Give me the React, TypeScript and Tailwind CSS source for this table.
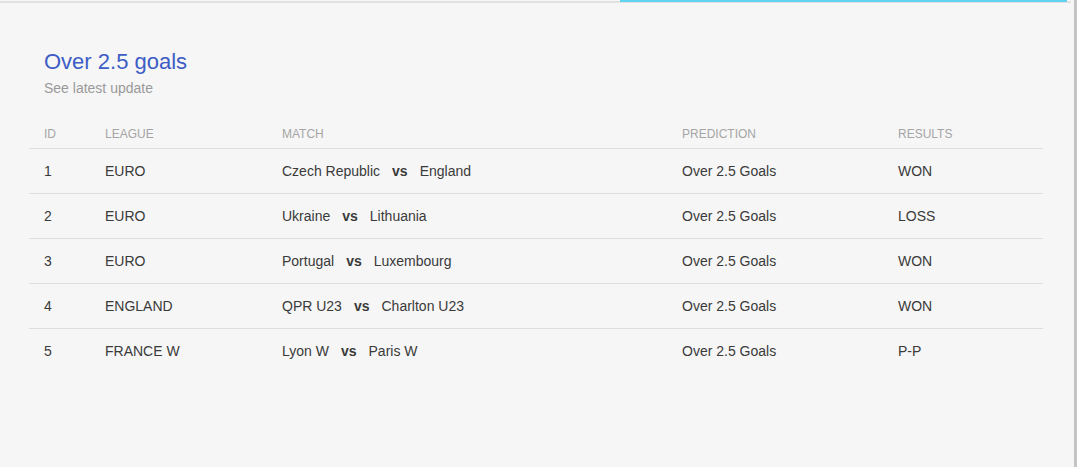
import React from 'react';

interface Row {
  id: number;
  league: string;
  home: string;
  away: string;
  prediction: string;
  result: string;
}

const rows: Row[] = [
  { id: 1, league: 'EURO', home: 'Czech Republic', away: 'England', prediction: 'Over 2.5 Goals', result: 'WON' },
  { id: 2, league: 'EURO', home: 'Ukraine', away: 'Lithuania', prediction: 'Over 2.5 Goals', result: 'LOSS' },
  { id: 3, league: 'EURO', home: 'Portugal', away: 'Luxembourg', prediction: 'Over 2.5 Goals', result: 'WON' },
  { id: 4, league: 'ENGLAND', home: 'QPR U23', away: 'Charlton U23', prediction: 'Over 2.5 Goals', result: 'WON' },
  { id: 5, league: 'FRANCE W', home: 'Lyon W', away: 'Paris W', prediction: 'Over 2.5 Goals', result: 'P-P' },
];

const App: React.FC = () => {
  return (
    <div className="w-[1077px] h-[467px] overflow-hidden flex bg-[#f6f6f6]" style={{ fontFamily: '"Liberation Sans", Arial, sans-serif' }}>
      <div className="flex-1 flex flex-col">
        {/* top strip */}
        <div className="relative h-[3px] border-b-2 border-[#e2e2e2] mr-[3px]">
          <div className="absolute top-0 left-[620px] right-[4px] h-[2px] bg-[#5fd3ef]" />
        </div>

        <div className="pl-[29px] pr-[31px] pt-[46px]">
          <div className="pl-[15px]">
            <h1 className="text-[22px] leading-[26px] text-[#3d5cc5]">Over 2.5 goals</h1>
            <p className="text-[14px] leading-[16px] mt-[5px] text-[#9a9a9a]">See latest update</p>
          </div>

          {/* table */}
          <div className="mt-[23px] text-[14px] text-[#3a3a3a]">
            <div className="grid grid-cols-[76px_177px_400px_216px_1fr] h-[30px] items-center border-b border-[#dedede] text-[12px] text-[#a5a5a5] uppercase">
              <div className="pl-[15px]">ID</div>
              <div>League</div>
              <div>Match</div>
              <div>Prediction</div>
              <div>Results</div>
            </div>
            {rows.map((r, i) => (
              <div key={r.id} className={i < rows.length - 1 ? 'grid grid-cols-[76px_177px_400px_216px_1fr] h-[45px] items-center border-b border-[#dedede]' : 'grid grid-cols-[76px_177px_400px_216px_1fr] h-[45px] items-center'}>
                <div className="pl-[15px]">{r.id}</div>
                <div>{r.league}</div>
                <div className="flex items-center">
                  <span>{r.home}</span>
                  <span className="font-bold mx-[12px]">vs</span>
                  <span>{r.away}</span>
                </div>
                <div>{r.prediction}</div>
                <div>{r.result}</div>
              </div>
            ))}
          </div>
        </div>
      </div>
      <div className="w-[3px] bg-[#c4c4c4]" />
    </div>
  );
};

export default App;
